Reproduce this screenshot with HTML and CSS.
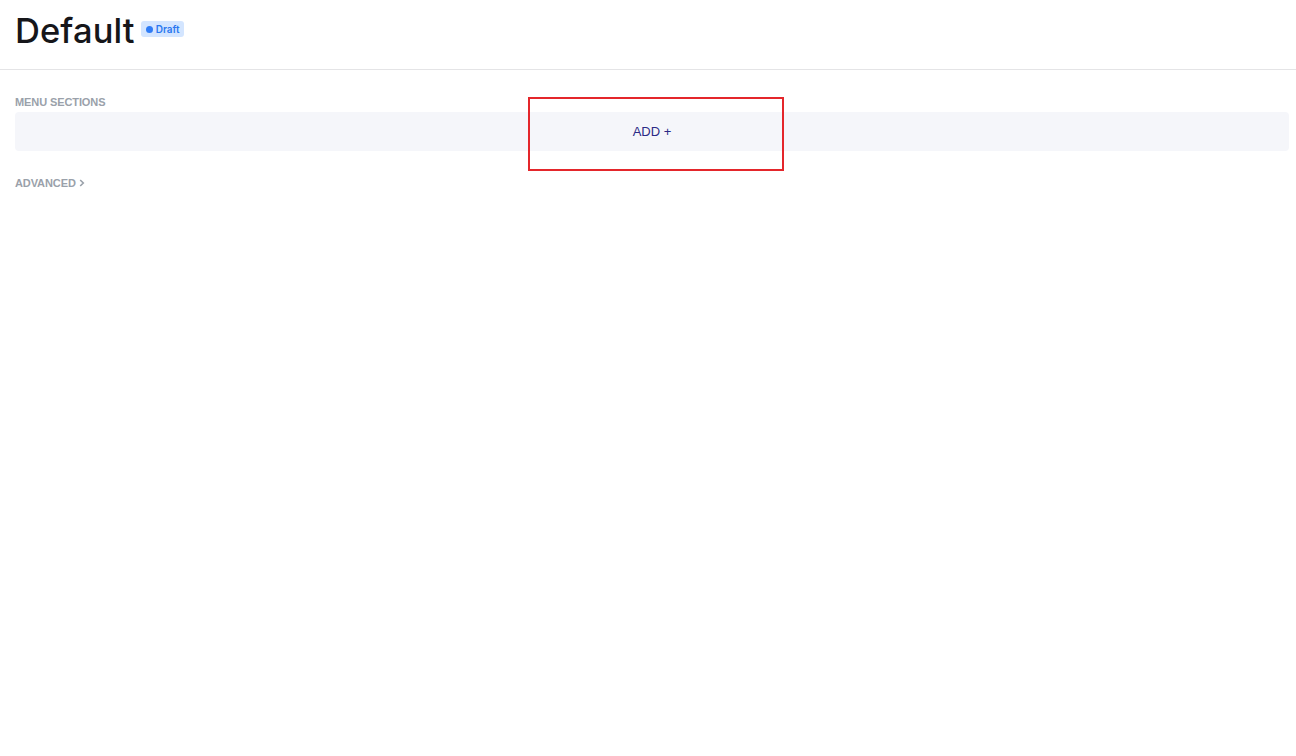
FILE: index.html
```html
<!DOCTYPE html>
<html lang="en">
<head>
<meta charset="utf-8">
<title>Default</title>
<link rel="stylesheet" href="styles.css">
</head>
<body>
<header class="page-header">
  <h1 class="title">Default</h1>
  <span class="badge"><span class="badge-dot"></span>Draft</span>
</header>
<main class="content">
  <section class="menu-sections">
    <div class="section-label">MENU SECTIONS</div>
    <div class="add-row">
      <button class="add-btn" type="button">ADD +</button>
    </div>
  </section>
  <div class="advanced">ADVANCED <svg class="chev" width="6" height="8" viewBox="0 0 6 8"><path d="M1.2 1 L4.3 4 L1.2 7" fill="none" stroke="currentColor" stroke-width="1.6"/></svg></div>
</main>
<div class="highlight"></div>
</body>
</html>
```
FILE: styles.css
```css
html, body {
  margin: 0;
  padding: 0;
  background: #ffffff;
  font-family: "Liberation Sans", Arial, sans-serif;
}

.page-header {
  display: flex;
  align-items: center;
  gap: 6px;
  height: 70px;
  padding: 0 15px;
  border-bottom: 1px solid #e4e4e6;
  box-sizing: border-box;
}

.title {
  margin: 0;
  font-family: Inter, "Noto Sans", sans-serif;
  font-size: 34.5px;
  font-weight: 500;
  color: #16161a;
  letter-spacing: 0.1px;
  line-height: 1;
  margin-top: -7px;
}

.badge {
  display: inline-flex;
  align-items: center;
  gap: 3px;
  height: 16px;
  padding: 0 4px 0 5px;
  border-radius: 3px;
  background: #d3e5ff;
  color: #2a78f0;
  font-family: Inter, "Noto Sans", sans-serif;
  font-size: 10px;
  font-weight: 600;
  margin-top: -11px;
}

.badge-dot {
  width: 7px;
  height: 7px;
  border-radius: 50%;
  background: #2f7cf6;
}

.content {
  padding: 26px 7px 0 15px;
}

.section-label {
  font-size: 11px;
  font-weight: 700;
  color: #9aa1aa;
  line-height: 12px;
  margin-bottom: 4px;
  letter-spacing: -0.1px;
}

.add-row {
  display: flex;
  justify-content: center;
  align-items: center;
  height: 39px;
  background: #f5f6fa;
  border-radius: 4px;
}

.add-btn {
  border: 0;
  background: transparent;
  padding: 0;
  font-family: "Liberation Sans", Arial, sans-serif;
  font-size: 13px;
  color: #2b2a86;
  cursor: pointer;
}

.advanced {
  display: flex;
  align-items: center;
  gap: 3px;
  margin-top: 26px;
  font-size: 11px;
  font-weight: 700;
  color: #9aa1aa;
  line-height: 12px;
  letter-spacing: -0.1px;
}

.chev {
  color: #9aa1aa;
}

.highlight {
  position: absolute;
  left: 528px;
  top: 97px;
  width: 252px;
  height: 70px;
  border: 2px solid #e4262b;
  pointer-events: none;
}
```
